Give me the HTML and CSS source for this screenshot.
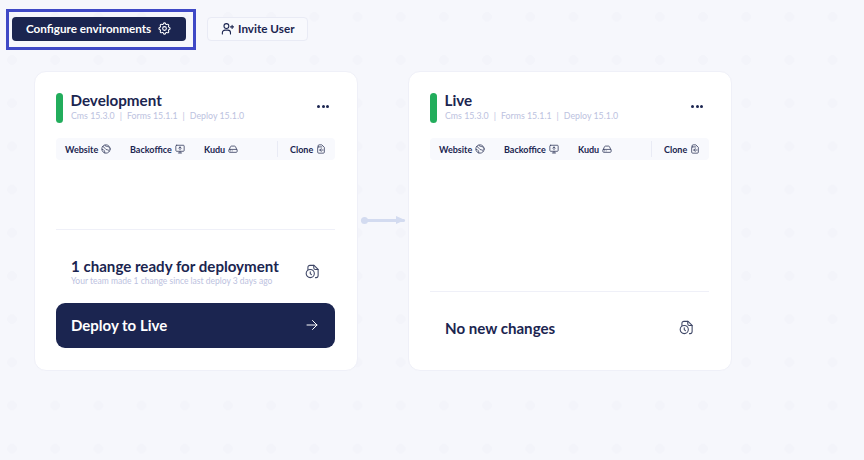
FILE: index.html
```html
<!DOCTYPE html>
<html lang="en">
<head>
    <meta charset="UTF-8">
    <meta name="viewport" content="width=device-width, initial-scale=1.0">
    <title>Environments</title>
    <link rel="stylesheet" href="styles.css">
</head>
<body>

    <!-- Icon sprite -->
    <svg class="sprite" xmlns="http://www.w3.org/2000/svg">
        <symbol id="i-gear" viewBox="0 0 24 24">
            <path d="M10.325 4.317c.426-1.756 2.924-1.756 3.35 0a1.724 1.724 0 0 0 2.573 1.066c1.543-.94 3.31.826 2.37 2.37a1.724 1.724 0 0 0 1.065 2.572c1.756.426 1.756 2.924 0 3.35a1.724 1.724 0 0 0-1.066 2.573c.94 1.543-.826 3.31-2.37 2.37a1.724 1.724 0 0 0-2.572 1.065c-.426 1.756-2.924 1.756-3.35 0a1.724 1.724 0 0 0-2.573-1.066c-1.543.94-3.31-.826-2.37-2.37a1.724 1.724 0 0 0-1.065-2.572c-1.756-.426-1.756-2.924 0-3.35a1.724 1.724 0 0 0 1.066-2.573c-.94-1.543.826-3.31 2.37-2.37 1 .608 2.296.07 2.572-1.065z"/>
            <circle cx="12" cy="12" r="3"/>
        </symbol>
        <symbol id="i-user-plus" viewBox="0 0 24 24">
            <circle cx="10" cy="7.500" r="4.500"/>
            <path d="M2.500 22v-2a5 5 0 0 1 5-5h5a5 5 0 0 1 5 5v2"/>
            <path d="M17.500 9h6M20.500 6v6"/>
        </symbol>
        <symbol id="i-globe" viewBox="0 0 24 24">
            <circle cx="12" cy="12" r="10"/>
            <path d="M4 6c3 1 5 3 6 5s3 3 5 3 4 1 5 3M9 3c1 2 4 3 6 3s3 1 5 2M3 13c2 0 4 1 5 3s1 3 1 5"/>
        </symbol>
        <symbol id="i-monitor" viewBox="0 0 24 24">
            <rect x="2" y="3" width="20" height="14.500" rx="2"/>
            <path d="M12 17.500v4M8 21.500h8M12 7v6.500M9 10l3-3 3 3"/>
        </symbol>
        <symbol id="i-drive" viewBox="0 0 24 24">
            <path d="M2.500 14l3.500-7.500a2.500 2.500 0 0 1 2.200-1.500h7.600a2.500 2.500 0 0 1 2.200 1.500l3.500 7.500"/>
            <rect x="2" y="13" width="20" height="7" rx="2.500"/>
            <path d="M6 16.500h.01M10 16.500h.01"/>
        </symbol>
        <symbol id="i-clone" viewBox="0 0 24 24">
            <path d="M5 7V4.500a2.500 2.500 0 0 1 2.500-2.500h6.500l6 6v11.500a2.500 2.500 0 0 1-2.500 2.500h-11a2.500 2.500 0 0 1-2.500-2.500v-10a2 2 0 0 1 1-2z"/>
            <path d="M17 14.500H9M12.500 11l-3.500 3.500 3.500 3.500M5 7h9"/>
        </symbol>
        <symbol id="i-changes" viewBox="0 0 24 24">
            <path d="M5 8.500V5a3.500 3.500 0 0 1 3.500-3.500h7l7 7V19a3.500 3.500 0 0 1-3.500 3.500h-1"/>
            <path d="M15 1.500v4a3 3 0 0 0 3 3h4.500"/>
            <circle cx="9" cy="15.500" r="7"/>
            <path d="M9 12.500v3l2 2"/>
        </symbol>
        <symbol id="i-arrow" viewBox="0 0 24 24">
            <path d="M2 12h20M13 3l9 9-9 9"/>
        </symbol>
    </svg>

    <!-- Top actions -->
    <div class="toolbar">
        <div class="configure-wrap">
            <button class="btn btn-dark">Configure environments <svg class="icon icon-15"><use href="#i-gear"/></svg></button>
            <div class="highlight"></div>
        </div>
        <button class="btn btn-light"><svg class="icon icon-14"><use href="#i-user-plus"/></svg> Invite User</button>
    </div>

    <!-- Environments -->
    <div class="environments">

        <div class="env-card">
            <div class="env-header">
                <div class="status-bar"></div>
                <div class="env-info">
                    <h2>Development</h2>
                    <p>Cms 15.3.0<span class="sep">|</span>Forms 15.1.1<span class="sep">|</span>Deploy 15.1.0</p>
                </div>
                <div class="more"><span></span><span></span><span></span></div>
            </div>
            <div class="env-links">
                <a class="link-website">Website <svg class="icon"><use href="#i-globe"/></svg></a>
                <a class="link-backoffice">Backoffice <svg class="icon"><use href="#i-monitor"/></svg></a>
                <a class="link-kudu">Kudu <svg class="icon"><use href="#i-drive"/></svg></a>
                <a class="link-clone">Clone <svg class="icon"><use href="#i-clone"/></svg></a>
            </div>
            <div class="env-footer footer-ready">
                <div class="changes">
                    <div>
                        <h3>1 change ready for deployment</h3>
                        <p>Your team made 1 change since last deploy 3 days ago</p>
                    </div>
                    <svg class="icon icon-16"><use href="#i-changes"/></svg>
                </div>
                <button class="deploy-btn">Deploy to Live <svg class="icon icon-13"><use href="#i-arrow"/></svg></button>
            </div>
        </div>

        <div class="connector">
            <div class="connector-line"></div>
        </div>

        <div class="env-card">
            <div class="env-header">
                <div class="status-bar"></div>
                <div class="env-info">
                    <h2>Live</h2>
                    <p>Cms 15.3.0<span class="sep">|</span>Forms 15.1.1<span class="sep">|</span>Deploy 15.1.0</p>
                </div>
                <div class="more"><span></span><span></span><span></span></div>
            </div>
            <div class="env-links">
                <a class="link-website">Website <svg class="icon"><use href="#i-globe"/></svg></a>
                <a class="link-backoffice">Backoffice <svg class="icon"><use href="#i-monitor"/></svg></a>
                <a class="link-kudu">Kudu <svg class="icon"><use href="#i-drive"/></svg></a>
                <a class="link-clone">Clone <svg class="icon"><use href="#i-clone"/></svg></a>
            </div>
            <div class="env-footer footer-empty">
                <div class="changes">
                    <h3>No new changes</h3>
                    <svg class="icon icon-16"><use href="#i-changes"/></svg>
                </div>
            </div>
        </div>

    </div>

</body>
</html>
```
FILE: styles.css
```css
/* Reset and Basic Styles */
* {
    margin: 0;
    padding: 0;
    box-sizing: border-box;
}
html, body {
    height: 100%;
}
body {
    font-family: Lato, "Open Sans", sans-serif;
    color: #1b2550;
    background-color: #f6f7fc;
    background-image: radial-gradient(circle, #f3f4fa 4.500px, transparent 5px);
    background-size: 43.2px 43.2px;
    background-position: -9.6px -4.8px;
    padding: 17px 12px 0;
    overflow: hidden;
}
.sprite {
    display: none;
}

/* Icons */
.icon {
    width: 10px;
    height: 10px;
    fill: none;
    stroke: currentColor;
    stroke-width: 2;
    stroke-linecap: round;
    stroke-linejoin: round;
    flex-shrink: 0;
}
.icon-13 {
    width: 12px;
    height: 12px;
}
.icon-14 {
    width: 13px;
    height: 13px;
}
.icon-15 {
    width: 15px;
    height: 15px;
    stroke-width: 1.700;
}
.icon-16 {
    width: 14px;
    height: 15px;
}

/* Top actions */
.toolbar {
    display: flex;
    align-items: center;
    gap: 21px;
}
.configure-wrap {
    position: relative;
}
.highlight {
    position: absolute;
    left: -6px;
    top: -8px;
    width: 190px;
    height: 41px;
    border: 3px solid #3f49c6;
    pointer-events: none;
}
.btn {
    height: 24px;
    display: flex;
    align-items: center;
    padding-bottom: 2px;
    font-family: inherit;
    font-size: 11.700px;
    font-weight: 700;
    border-radius: 4px;
}
.btn-dark {
    width: 174px;
    padding-left: 14px;
    gap: 6px;
    background-color: #1b2550;
    color: #fff;
    border: none;
}
.btn-light {
    width: 101px;
    padding-left: 13px;
    gap: 4px;
    background-color: #f8f9fd;
    color: #1b2550;
    border: 1px solid #e9ebf5;
}

/* Environment Cards */
.environments {
    display: flex;
    margin-top: 30px;
    margin-left: 22px;
}
.env-card {
    width: 324px;
    height: 300px;
    background-color: #fff;
    border: 1px solid #eff0f8;
    border-radius: 12px;
    padding: 21px 22px 0 21px;
    display: flex;
    flex-direction: column;
}
.env-header {
    display: flex;
    height: 30px;
}
.status-bar {
    width: 7px;
    height: 30px;
    background-color: #22ad5c;
    border-radius: 4px;
    margin-right: 8px;
}
.env-info {
    flex-grow: 1;
}
.env-info h2 {
    font-size: 15.200px;
    font-weight: 700;
    line-height: 16px;
    margin: -1px 0 0 -0.500px;
}
.env-info p {
    font-size: 8.800px;
    line-height: 12px;
    margin-top: 2px;
    color: #bcc2e0;
}
.sep {
    margin: 0 5px;
}
.more {
    display: flex;
    gap: 1.500px;
    margin: 12px 6px 0 0;
}
.more span {
    width: 3px;
    height: 3px;
    background-color: #1b2550;
    border-radius: 50%;
}

/* Environment Links */
.env-links {
    display: flex;
    align-items: center;
    height: 22px;
    margin-top: 15px;
    background-color: #f8f9fd;
    border-radius: 4px;
    font-size: 9px;
    font-weight: 700;
    padding-left: 9px;
}
.env-links a {
    display: flex;
    align-items: center;
    gap: 3px;
}
.env-links .icon {
    color: #3d4565;
}
.link-website {
    width: 65px;
}
.link-backoffice {
    width: 74px;
}
.link-kudu {
    width: 73px;
}
.link-clone {
    height: 16px;
    padding-left: 12px;
    border-left: 1px solid #e9ebf5;
}

/* Footer of a card */
.env-footer {
    margin-top: auto;
    border-top: 1px solid #eff0f8;
}
.footer-ready {
    height: 141px;
}
.footer-empty {
    height: 79px;
}
.changes {
    display: flex;
    justify-content: space-between;
    align-items: center;
    padding: 0 16px 0 15px;
}
.footer-ready .changes {
    height: 73px;
    padding-top: 10px;
}
.footer-empty .changes {
    height: 71px;
}
.changes h3 {
    font-size: 15.100px;
    font-weight: 700;
    line-height: 18px;
}
.changes p {
    font-size: 8.500px;
    line-height: 12px;
    color: #bcc2e0;
}
.changes .icon {
    color: #3d4565;
    stroke-width: 1.800;
}
.deploy-btn {
    width: 100%;
    height: 45px;
    display: flex;
    justify-content: space-between;
    align-items: center;
    padding: 0 17px 2px 15px;
    background-color: #1b2550;
    color: #fff;
    border: none;
    border-radius: 9px;
    font-family: inherit;
    font-size: 15px;
    font-weight: 700;
}

/* Arrow between the cards */
.connector {
    width: 50px;
    display: flex;
    align-items: center;
    justify-content: center;
}
.connector-line {
    position: relative;
    width: 44px;
    height: 3px;
    margin-bottom: 2px;
    background-color: #d3dbf0;
    border-radius: 2px;
}
.connector-line::before {
    content: '';
    position: absolute;
    left: 0;
    top: -2px;
    width: 7px;
    height: 7px;
    background-color: #d3dbf0;
    border-radius: 50%;
}
.connector-line::after {
    content: '';
    position: absolute;
    right: 0;
    top: -3px;
    border-left: 9px solid #d3dbf0;
    border-top: 4.500px solid transparent;
    border-bottom: 4.500px solid transparent;
}
```
